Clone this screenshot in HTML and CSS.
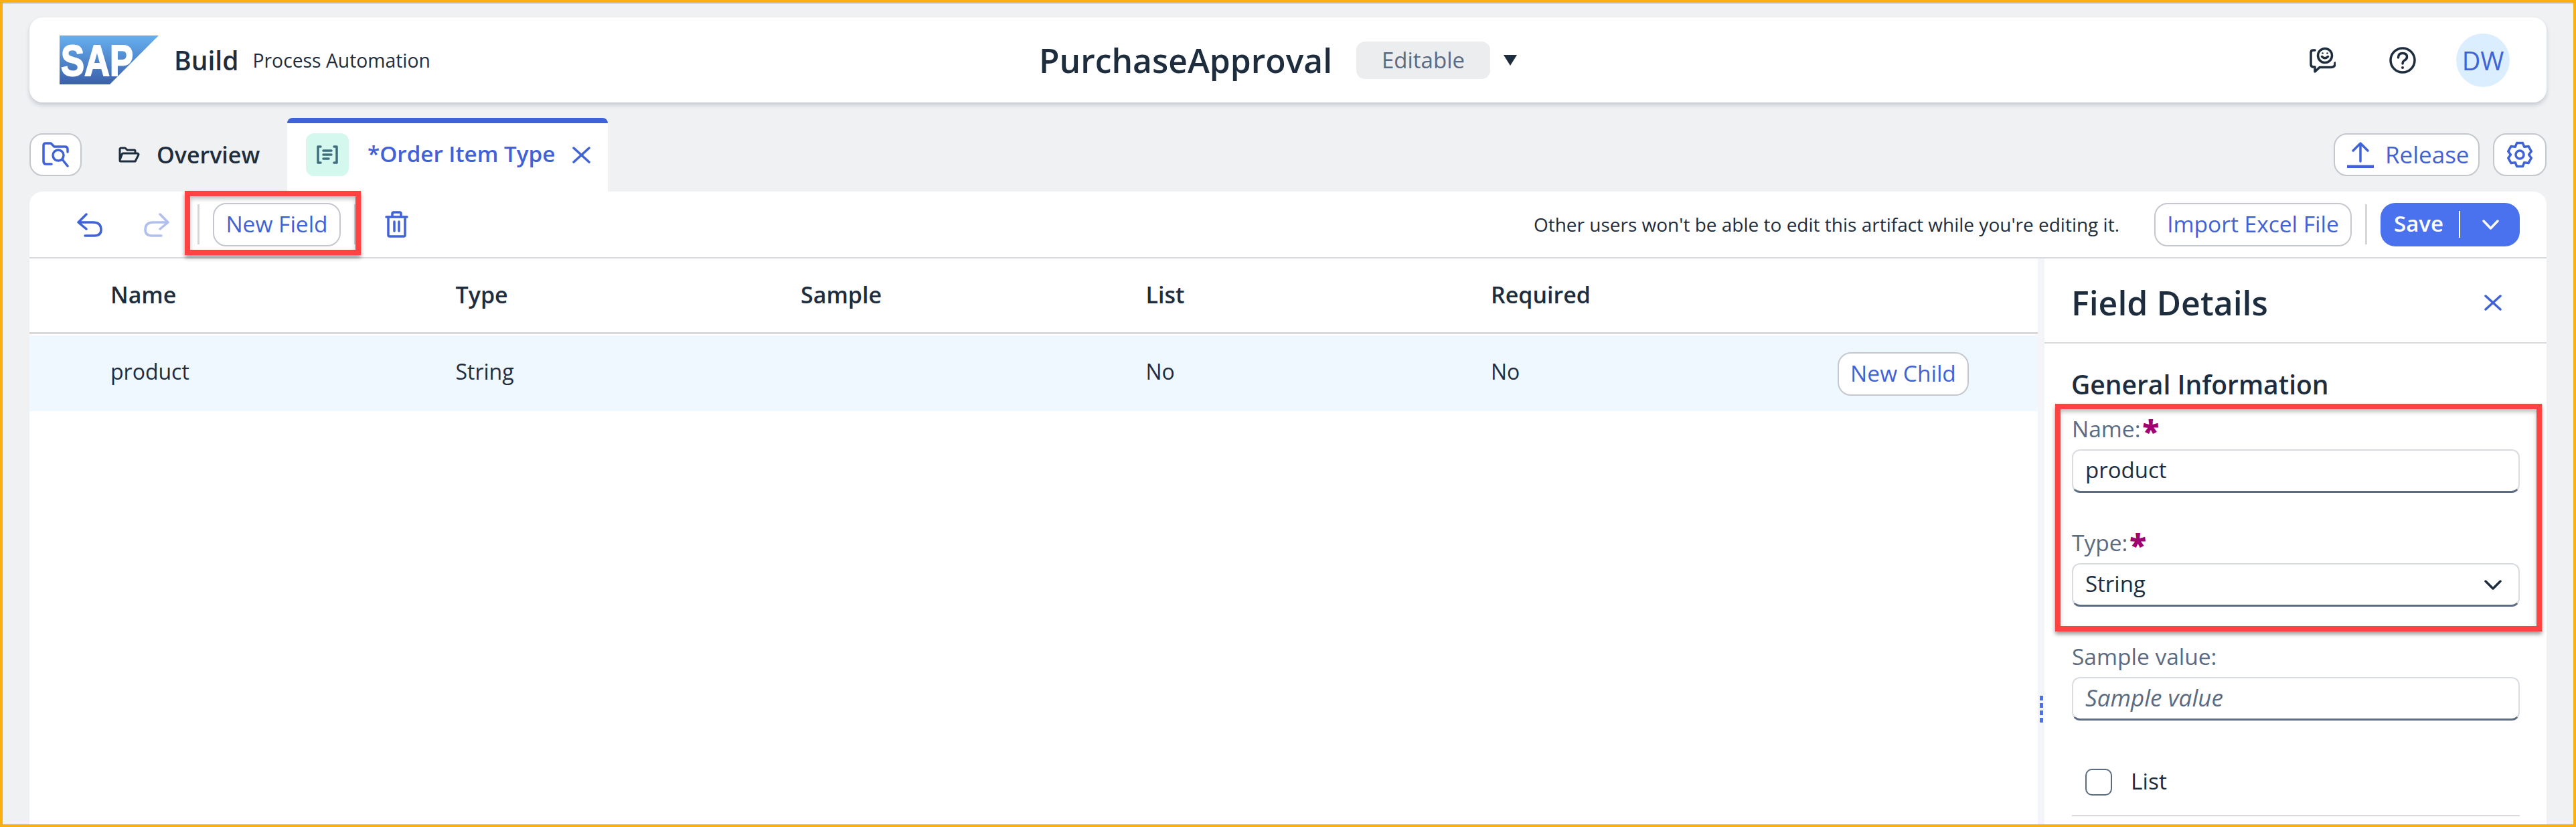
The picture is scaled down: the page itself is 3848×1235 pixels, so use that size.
FILE: index.html
```html
<!DOCTYPE html>
<html lang="en">
<head>
    <meta charset="UTF-8">
    <title>PurchaseApproval - Order Item Type</title>
    <link rel="stylesheet" href="styles.css">
</head>
<body>
<div class="page">
    <header class="shell">
        <div class="brand">
            <svg class="logo" width="148" height="73" viewBox="0 0 148 73">
                <defs>
                    <linearGradient id="sapBlue" x1="0" y1="0" x2="0" y2="1">
                        <stop offset="0" stop-color="#66b0f0"/>
                        <stop offset="1" stop-color="#3b60aa"/>
                    </linearGradient>
                </defs>
                <polygon points="0,0 148,0 75,73 0,73" fill="url(#sapBlue)"/>
                <text x="2" y="60" class="logo-text" textLength="108" lengthAdjust="spacingAndGlyphs">SAP</text>
            </svg>
            <span class="brand-name">Build</span>
            <span class="brand-sub">Process Automation</span>
        </div>
        <div class="doc">
            <span class="doc-title">PurchaseApproval</span>
            <span class="doc-status">Editable</span>
            <span class="doc-caret"></span>
        </div>
        <div class="shell-actions">
            <svg class="icon-dark" width="40" height="40" viewBox="0 0 40 40">
                <path d="M9 5H6.500Q3 5 3 8.500V26Q3 30 7 30H9V37L16 30.500H33Q39 30.500 39 25V24"/>
                <circle cx="24" cy="13" r="10.500"/>
                <path d="M19.500 14.500Q24 19 28.500 14.500"/>
                <circle class="dot" cx="20.500" cy="9.500" r="1.300"/>
                <circle class="dot" cx="27.500" cy="9.500" r="1.300"/>
            </svg>
            <svg class="icon-dark help" width="40" height="40" viewBox="0 0 40 40">
                <circle cx="20" cy="20" r="18"/>
                <path d="M13.500 16Q13.500 9.500 20 9.500Q26.500 9.500 26.500 15Q26.500 18 23 20Q20 21.500 20 25"/>
                <circle class="dot" cx="20" cy="31" r="2"/>
            </svg>
            <div class="avatar">DW</div>
        </div>
    </header>

    <nav class="tabs">
        <button class="btn btn-square-s">
            <svg class="icon-blue" width="40" height="38" viewBox="0 0 40 38">
                <path d="M14 33H6Q2 33 2 29V5Q2 2 5 2H13L18 7H34Q38 7 38 11V15"/>
                <circle cx="24" cy="20" r="8"/>
                <path d="M30 26L38 36"/>
            </svg>
        </button>
        <div class="tab-plain">
            <svg class="icon-dark thin" width="32" height="24" viewBox="0 0 32 24">
                <path d="M3 22Q2 22 2 20V4Q2 2 4 2H10L13 5H24Q25 5 25 7V9M3 22H25L30 12Q30 10 28 10H7Q5 10 5 12L2 20"/>
            </svg>
            <span>Overview</span>
        </div>
        <div class="tab-active">
            <div class="tab-tile">
                <svg class="icon-teal" width="32" height="28" viewBox="0 0 32 28">
                    <path d="M6 2H2V26H6M26 2H30V26H26M10 8H22M10 14H22M10 20H18"/>
                </svg>
            </div>
            <span class="tab-label">*Order Item Type</span>
            <svg class="icon-blue" width="27" height="25" viewBox="0 0 27 25">
                <path d="M2 2L25 23M25 2L2 23"/>
            </svg>
        </div>
        <div class="tabs-right">
            <button class="btn btn-release">
                <svg class="icon-blue" width="40" height="40" viewBox="0 0 40 40">
                    <path d="M20 3V30M9 14L20 3L31 14"/>
                    <path class="thick" d="M0 38H40"/>
                </svg>
                <span>Release</span>
            </button>
            <button class="btn btn-square">
                <svg class="icon-blue" width="40" height="40" viewBox="0 0 40 40">
                    <polygon points="15.650,2.530 24.350,2.530 26.750,8.310 32.950,7.490 37.300,15.030 33.500,20 37.300,24.970 32.950,32.510 26.750,31.690 24.350,37.470 15.650,37.470 13.250,31.690 7.050,32.510 2.700,24.970 6.500,20 2.700,15.030 7.050,7.490 13.250,8.310"/>
                    <circle cx="20" cy="20" r="6"/>
                </svg>
            </button>
        </div>
    </nav>

    <main class="panel">
        <div class="toolbar">
            <svg class="icon-blue undo" width="38" height="36" viewBox="0 0 38 36">
                <path d="M14 2L2 14L14 24M2 14H24Q36 14 36 25Q36 34 26 34H12"/>
            </svg>
            <svg class="icon-blue redo" width="38" height="36" viewBox="0 0 38 36">
                <path d="M24 2L36 14L24 24M36 14H14Q2 14 2 25Q2 34 12 34H26"/>
            </svg>
            <span class="tool-sep"></span>
            <button class="btn btn-text btn-new">New Field</button>
            <span class="tool-sep"></span>
            <svg class="icon-blue trash" width="35" height="40" viewBox="0 0 35 40">
                <path d="M2 9H33M11 8V4Q11 2 13 2H22Q24 2 24 4V8M5 9V36Q5 38 7 38H28Q30 38 30 36V9M14 16V30M21 16V30"/>
            </svg>
            <span class="tool-msg">Other users won't be able to edit this artifact while you're editing it.</span>
            <button class="btn btn-text btn-import">Import Excel File</button>
            <span class="tool-sep sep-save"></span>
            <div class="btn-save">
                <span class="save-label">Save</span>
                <span class="save-split"></span>
                <svg class="icon-white" width="25" height="15" viewBox="0 0 25 15">
                    <path d="M2 2L12.500 13L23 2"/>
                </svg>
            </div>
        </div>

        <div class="content">
            <section class="table">
                <div class="table-head">
                    <span>Name</span><span>Type</span><span>Sample</span><span>List</span><span>Required</span>
                </div>
                <div class="table-row">
                    <span>product</span><span>String</span><span></span><span>No</span>
                    <span class="cell-last">No<button class="btn btn-text btn-child">New Child</button></span>
                </div>
            </section>

            <div class="sash">
                <i></i><i></i><i></i><i></i>
            </div>

            <aside class="details">
                <div class="details-head">
                    <h2>Field Details</h2>
                    <svg class="icon-blue" width="26" height="24" viewBox="0 0 26 24">
                        <path d="M2 2L24 22M24 2L2 22"/>
                    </svg>
                </div>
                <div class="details-body">
                    <h3>General Information</h3>
                    <div class="field field-first">
                        <div class="field-label">Name:<b class="req">*</b></div>
                        <div class="input">product</div>
                    </div>
                    <div class="field">
                        <div class="field-label">Type:<b class="req">*</b></div>
                        <div class="input input-select">
                            String
                            <svg class="icon-dark" width="26" height="15" viewBox="0 0 26 15">
                                <path d="M2 2L13 13L24 2"/>
                            </svg>
                        </div>
                    </div>
                    <div class="field">
                        <div class="field-label">Sample value:</div>
                        <div class="input input-empty">Sample value</div>
                    </div>
                    <label class="check">
                        <span class="check-box"></span>
                        <span class="check-text">List</span>
                    </label>
                    <div class="details-rule"></div>
                </div>
            </aside>
        </div>
    </main>

    <!-- annotation boxes drawn on top of the screenshot -->
    <div class="mark mark-new"></div>
    <div class="mark mark-form"></div>
</div>
</body>
</html>
```

FILE: styles.css
```css
html, body {
    margin: 0;
    height: 100%;
}

body {
    font-family: "Open Sans", "Noto Sans", sans-serif;
    color: #1d2d3e;
    overflow: hidden;
}

.page {
    position: relative;
    box-sizing: border-box;
    height: 1235px;
    border: 4px solid #fbae10;
    background: #eff1f3;
    padding: 22px 40px 0 40px;
    box-shadow: inset 0 2px 0 #d5d7dc;
    display: flex;
    flex-direction: column;
}

/* svg icons */
svg { flex: none; display: block; }
svg path, svg circle, svg polygon {
    fill: none;
    stroke-width: 3.500;
    stroke-linecap: round;
    stroke-linejoin: round;
}
svg .dot { fill: currentColor; stroke: none; }
.icon-dark { color: #1d2d3e; stroke: #1d2d3e; }
.icon-blue { color: #3f62d8; stroke: #3f62d8; }
.icon-white { stroke: #fff; }
.icon-teal { stroke: #3f6d7c; }
.thin path { stroke-width: 3; }
.thick { stroke-width: 5 !important; stroke-linecap: butt !important; }

/* top shell bar */
.shell {
    flex: none;
    height: 127px;
    background: #fff;
    border-radius: 20px;
    box-shadow: 0 4px 6px rgba(60, 70, 90, 0.22);
    display: flex;
    align-items: center;
    padding: 0 55px 0 45px;
}
.brand {
    width: 1463px;
    display: flex;
    align-items: center;
}
.logo path, .logo polygon { stroke: none; }
.logo polygon { fill: url(#sapBlue); }
.logo-text {
    font-family: "Liberation Sans", sans-serif;
    font-weight: bold;
    font-size: 64px;
    fill: #fff;
    stroke: #fff;
    stroke-width: 2;
}
.brand-name {
    margin-left: 23px;
    font-size: 39px;
    font-weight: 600;
}
.brand-sub {
    margin-left: 21px;
    font-size: 28.300px;
}
.doc {
    display: flex;
    align-items: center;
}
.doc-title {
    width: 432px;
    font-size: 49.800px;
    font-weight: 600;
    white-space: nowrap;
}
.doc-status {
    margin-left: 42px;
    width: 200px;
    height: 56px;
    line-height: 56px;
    text-align: center;
    font-size: 33px;
    color: #5b6b82;
    background: #ebedef;
    border-radius: 13px;
}
.doc-caret {
    margin-left: 20px;
    border-top: 16px solid #1d2d3e;
    border-left: 10px solid transparent;
    border-right: 10px solid transparent;
}
.shell-actions {
    margin-left: auto;
    display: flex;
    align-items: center;
}
.help { margin-left: 80px; }
.avatar {
    margin-left: 60px;
    width: 80px;
    height: 80px;
    line-height: 80px;
    border-radius: 50%;
    background: #dbeeff;
    color: #3f62d8;
    text-align: center;
    font-size: 38px;
}

/* buttons */
.btn {
    box-sizing: border-box;
    height: 64px;
    background: #fff;
    border: 2px solid #c4c8ce;
    border-radius: 20px;
    padding: 0;
    font-family: inherit;
    color: #3f62d8;
    display: flex;
    align-items: center;
    justify-content: center;
}
.btn-text {
    height: 65px;
    padding-bottom: 3px;
    font-size: 33.500px;
    font-weight: 500;
}
.btn-square-s { width: 78px; margin-top: 23px; }
.btn-square { width: 80px; }

/* tab row */
.tabs {
    flex: none;
    height: 110px;
    margin-top: 23px;
    display: flex;
    align-items: flex-start;
}
.tab-plain {
    margin: 23px 0 0 55px;
    height: 64px;
    width: 252px;
    display: flex;
    align-items: center;
    gap: 25px;
    font-size: 34px;
    font-weight: 600;
}
.tab-active {
    box-sizing: border-box;
    width: 479px;
    height: 110px;
    background: #fff;
    border-top: 8px solid #3f62d8;
    border-radius: 8px 8px 0 0;
    padding: 15px 0 0 28px;
    display: flex;
    align-items: flex-start;
}
.tab-tile {
    width: 64px;
    height: 64px;
    background: #d5f8ee;
    border-radius: 12px;
    display: flex;
    align-items: center;
    justify-content: center;
}
.tab-active .tab-label {
    margin-left: 28px;
    width: 279px;
    height: 64px;
    line-height: 61px;
    font-size: 33.200px;
    font-weight: 600;
    color: #3f62d8;
    white-space: nowrap;
}
.tab-active .icon-blue { margin: 20px 0 0 27px; }
.tabs-right {
    margin-left: auto;
    padding-top: 23px;
    display: flex;
    gap: 20px;
}
.btn-release {
    width: 218px;
    justify-content: flex-start;
    padding: 0 0 2px 18px;
    gap: 17px;
    font-size: 35px;
    font-weight: 500;
}
.btn-release svg { margin-top: 2px; }

/* main panel */
.panel {
    flex: 1;
    min-height: 0;
    background: #fff;
    border-radius: 20px 20px 0 0;
    display: flex;
    flex-direction: column;
    overflow: hidden;
}
.toolbar {
    flex: none;
    box-sizing: border-box;
    height: 100px;
    border-bottom: 2px solid #d9dadd;
    padding: 0 40px 0 71px;
    display: flex;
    align-items: center;
}
.undo { margin-bottom: -1px; }
.redo { margin-left: 62px; opacity: 0.4; margin-bottom: -1px; }
.tool-sep {
    width: 3px;
    height: 60px;
    background: #d5d7da;
    margin: 0 0 0 42px;
}
.btn-new { width: 191px; margin-left: 20px; }
.btn-new + .tool-sep { margin-left: 20px; }
.trash { margin-left: 43px; }
.tool-msg {
    margin-left: auto;
    font-size: 28px;
}
.btn-import {
    width: 295px;
    margin-left: 52px;
}
.sep-save { margin-left: 20px; }
.btn-save {
    margin-left: 20px;
    box-sizing: border-box;
    width: 208px;
    height: 65px;
    background: #4a72ee;
    border-radius: 22px;
    color: #fff;
    padding-left: 20px;
    display: flex;
    align-items: center;
}
.save-label {
    width: 97px;
    padding-bottom: 3px;
    font-size: 33px;
    font-weight: 600;
}
.save-split {
    width: 2px;
    height: 40px;
    background: #fff;
    margin-right: 33px;
}

.content {
    flex: 1;
    min-height: 0;
    display: flex;
}

/* table */
.table {
    width: 3000px;
    flex: none;
}
.table-head, .table-row {
    display: grid;
    grid-template-columns: repeat(4, 515.500px) 1fr;
    padding-left: 121px;
    align-items: center;
    font-size: 32px;
}
.table-head {
    box-sizing: border-box;
    height: 113px;
    border-bottom: 3px solid #d9d9d9;
    padding-bottom: 2px;
    font-size: 34px;
    font-weight: 600;
}
.table-row {
    box-sizing: border-box;
    height: 113px;
    margin-top: 2px;
    padding-bottom: 6px;
    background: #eff7ff;
}
.cell-last {
    display: flex;
    align-items: center;
    justify-content: space-between;
    padding-right: 103px;
}
.btn-child { width: 196px; margin-top: 7px; }

.sash {
    flex: none;
    width: 10px;
    background: #f4f5f8;
    display: flex;
    flex-direction: column;
    align-items: center;
    justify-content: flex-end;
    gap: 4px;
    padding-bottom: 152px;
}
.sash i {
    width: 5px;
    height: 7px;
    background: #4a72ee;
}

/* side details */
.details {
    flex: 1;
    min-width: 0;
}
.details-head {
    box-sizing: border-box;
    height: 127px;
    border-bottom: 2px solid #d9dadd;
    padding: 0 67px 0 40px;
    display: flex;
    align-items: center;
    justify-content: space-between;
}
.details-head h2 {
    margin: 6px 0 0;
    font-size: 50px;
    font-weight: 600;
}
.details-head svg { margin-top: 6px; }
.details-body {
    padding: 42px 40px 0 41px;
}
.details-body h3 {
    margin: 0 0 0 -1px;
    height: 42px;
    line-height: 38px;
    font-size: 39px;
    font-weight: 600;
}
.field { margin-top: 55px; }
.field-first { margin-top: 24px; }
.field-label {
    height: 40px;
    line-height: 38px;
    font-size: 33.500px;
    color: #5b6b82;
}
.req {
    color: #a00070;
    font-size: 46px;
    font-weight: 800;
    line-height: 30px;
    margin-left: 3px;
    vertical-align: -8px;
}
.input {
    box-sizing: border-box;
    margin-top: 10px;
    height: 65px;
    background: #fff;
    border: 2px solid #d9dce1;
    border-bottom: 3px solid #5b6b82;
    border-radius: 12px;
    padding: 0 25px 3px 18px;
    font-size: 33px;
    display: flex;
    align-items: center;
    justify-content: space-between;
}
.input-select svg { margin-top: 3px; }
.input-empty {
    color: #5b6b82;
    font-size: 35px;
    font-style: italic;
}
.check {
    margin: 72px 0 0 20px;
    height: 40px;
    display: flex;
    align-items: center;
    gap: 28px;
    font-size: 33.500px;
}
.check-text { padding-bottom: 4px; }
.check-box {
    box-sizing: border-box;
    width: 40px;
    height: 40px;
    border: 2px solid #5b6b82;
    border-radius: 10px;
}
.details-rule {
    margin-top: 29px;
    height: 2px;
    background: #d9dadd;
}

/* red annotations */
.mark {
    position: absolute;
    box-sizing: border-box;
    border: 8px solid #ff4343;
    box-shadow: 0 4px 6px rgba(0, 0, 0, 0.4), inset 0 4px 6px rgba(0, 0, 0, 0.25);
}
.mark-new {
    left: 272px;
    top: 281px;
    width: 263px;
    height: 96px;
}
.mark-form {
    left: 3066px;
    top: 599px;
    width: 727px;
    height: 340px;
}
```
